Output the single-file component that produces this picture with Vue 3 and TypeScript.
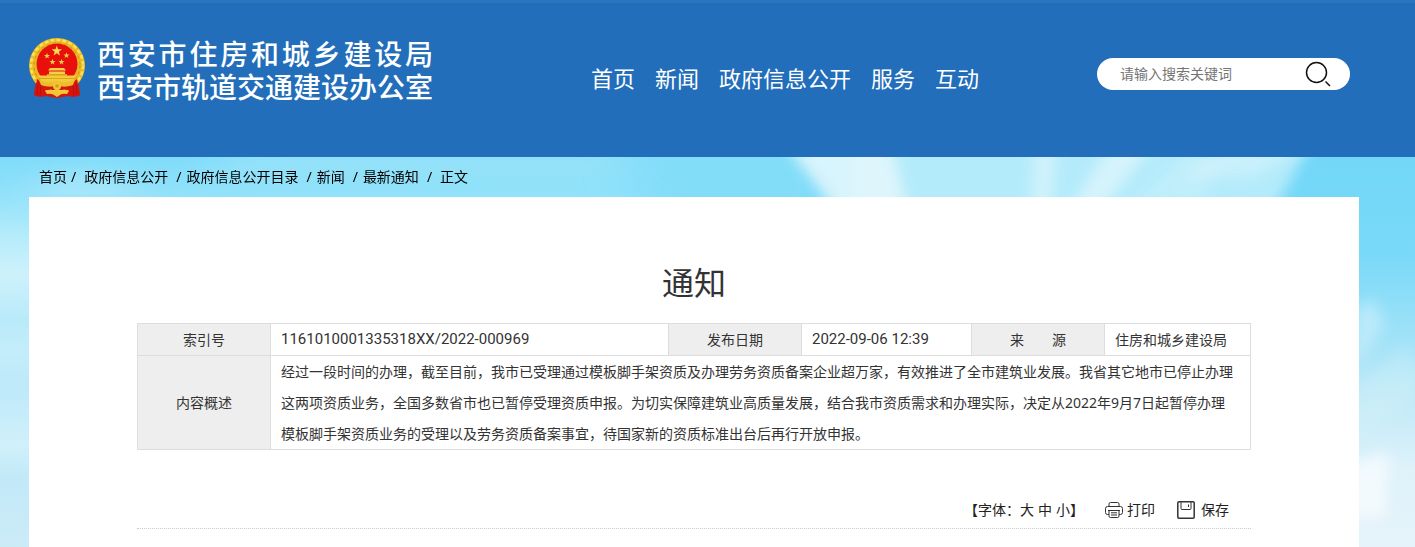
<template>
  <div class="page">
    <header class="header">
      <a class="brand" href="#">
        <svg class="emblem" viewBox="0 0 58 62" aria-hidden="true">
          <path d="M8 43 L6 58 Q12 61 18 59 L29 61 L40 59 Q46 61 52 58 L50 43Z" fill="#d8140d" />
          <ellipse cx="29" cy="28.500" rx="28" ry="27.500" fill="#e9b822" />
          <ellipse cx="29" cy="28.500" rx="26" ry="25.500" fill="none" stroke="#fbe05a" stroke-width="2.500" stroke-dasharray="4 2" />
          <ellipse cx="29" cy="28.500" rx="23" ry="22.500" fill="none" stroke="#cf9214" stroke-width="1" stroke-dasharray="3 3" />
          <circle cx="29" cy="27" r="20.500" fill="#e8100c" />
          <path :d="star(28.8, 14, 5.5)" fill="#fbdc4a" />
          <path v-for="s in smallStars" :key="s.x" :d="star(s.x, s.y, 3.2)" fill="#f6cf3f" />
          <path d="M22 31h14l2 2.500H20zM21 34.500h16V37H21z" fill="#f7d04a" />
          <path d="M19 37h20v2H19z" fill="#dca01c" />
          <path d="M10 38.500h38l-3 6-6 3H19l-6-3z" fill="#f4c93a" />
          <path d="M11 41.500h36" stroke="#d39a18" stroke-width=".8" />
          <path d="M9 42 L6 58 Q12 61 16 58 L18 49Z M49 42 L52 58 Q46 61 42 58 L40 49Z" fill="#d8140d" />
          <path d="M10 46l-1 12M13 48l-1 11M48 46l1 12M45 48l1 11" stroke="#a80f0a" stroke-width=".7" />
          <path d="M11 43q9 4 18 1q9 3 18-1l-2 5q-8 3-13 0l-3 1.500L26 48q-5 3-13 0z" fill="#edbd2d" />
          <path d="M16 49q8 2 13-1q5 3 13 1l-1 4q-8 1-12-1q-4 2-12 1z" fill="#d3190f" />
          <path d="M17 54q7-3 9 0l3-2l3 2q4-3 9 0l-2 3q-5-1-7 1l-3 2l-3-2q-3-2-7-1z" fill="#f1c738" />
          <circle cx="29" cy="49" r="4" fill="#f3c535" />
          <circle cx="29" cy="49" r="1.800" fill="#d89a1a" />
        </svg>
        <span class="names">
          <span class="name spread">西安市住房和城乡建设局</span>
          <span class="name">西安市轨道交通建设办公室</span>
        </span>
      </a>
      <nav class="nav" aria-label="主导航">
        <a v-for="item in nav" :key="item" href="#">{{ item }}</a>
      </nav>
      <form class="search" role="search" @submit.prevent>
        <input v-model="keyword" type="text" aria-label="搜索" placeholder="请输入搜索关键词" />
        <button type="submit" aria-label="搜索">
          <svg viewBox="0 0 26 26" aria-hidden="true">
            <circle cx="11.500" cy="11.500" r="10" />
            <path d="M20.500 20.500l4.500 4.500" />
          </svg>
        </button>
      </form>
    </header>

    <div class="sky">
      <svg class="clouds" viewBox="0 0 1415 390" preserveAspectRatio="none" aria-hidden="true">
        <defs>
          <linearGradient id="west" x1="0" y1="0" x2="0" y2="1">
            <stop offset="0" stop-color="#7fdcf9" />
            <stop offset="0.100" stop-color="#92e2fa" />
            <stop offset="0.200" stop-color="#b4ebfb" />
            <stop offset="0.300" stop-color="#cdf1fb" />
            <stop offset="0.420" stop-color="#b9eafa" />
            <stop offset="0.500" stop-color="#c4edfa" />
            <stop offset="0.580" stop-color="#bde9f9" />
            <stop offset="0.740" stop-color="#d0f0fa" />
            <stop offset="0.820" stop-color="#c2e9f8" />
            <stop offset="1" stop-color="#cbebf7" />
          </linearGradient>
          <linearGradient id="east" x1="0" y1="0" x2="0" y2="1">
            <stop offset="0" stop-color="#72d7f8" />
            <stop offset="0.250" stop-color="#7ad9f8" />
            <stop offset="0.420" stop-color="#98e0f8" />
            <stop offset="0.600" stop-color="#bce8f7" />
            <stop offset="0.800" stop-color="#def2fa" />
            <stop offset="1" stop-color="#e6f3fa" />
          </linearGradient>
          <filter id="soft" x="-20%" y="-50%" width="140%" height="200%">
            <feGaussianBlur stdDeviation="7" />
          </filter>
          <filter id="haze" x="-30%" y="-80%" width="160%" height="260%">
            <feGaussianBlur stdDeviation="24 10" />
          </filter>
        </defs>
        <rect width="800" height="390" fill="url(#west)" />
        <rect x="800" width="615" height="390" fill="url(#east)" />
        <path d="M640-20h190v80H640z" fill="#82ddf9" filter="url(#haze)" />
        <path d="M850-30h470l-50 90H850z" fill="#b4ebfb" filter="url(#soft)" />
        <g filter="url(#haze)" fill="#e2f6fc">
          <path d="M250-20h380v40H200z" opacity="0.200" />
          <path d="M60 10l70 10v25H30z" opacity="0.300" />
        </g>
        <g filter="url(#soft)" fill="#e2f6fc">
          <path d="M780-20h110l18 75h-72z" opacity="0.900" />
          <path d="M1035-20h22l-5 75h-22z" opacity="0.600" />
          <path d="M1115-20h45l-60 75h-32z" opacity="0.700" />
          <path d="M1230-20h90l-65 40h-70z" opacity="0.450" />
          <path d="M1190-10l-60 60h70l20-40z" opacity="0.250" />
          <path d="M1355 150l20-8l10 26l-30 40z" opacity="0.450" />
          <path d="M1355 230l50-40l15 20v30l-65 40z" opacity="0.250" />
          <path d="M1350 305l40-10l-5 65h-35z" fill="#fff" opacity="0.600" />
        </g>
      </svg>

      <nav class="crumbs" aria-label="当前位置">
        <a href="#">首页</a><span class="slash first">/</span><a href="#">政府信息公开</a><span class="slash">/</span><a href="#">政府信息公开目录</a><span class="slash">/</span><a href="#">新闻</a><span class="slash">/</span><a href="#">最新通知</a><span class="slash last">/</span><span>正文</span>
      </nav>

      <main class="panel">
        <h1>通知</h1>
        <table class="info">
          <colgroup>
            <col class="label" /><col class="index" /><col class="label" /><col class="date" /><col class="label" /><col class="origin" />
          </colgroup>
          <tbody>
            <tr>
              <th scope="row">索引号</th>
              <td class="code">1161010001335318XX/2022-000969</td>
              <th scope="row">发布日期</th>
              <td class="code">2022-09-06 12:39</td>
              <th scope="row">来　　源</th>
              <td>住房和城乡建设局</td>
            </tr>
            <tr>
              <th scope="row">内容概述</th>
              <td colspan="5" class="summary">经过一段时间的办理，截至目前，我市已受理通过模板脚手架资质及办理劳务资质备案企业超万家，有效推进了全市建筑业发展。我省其它地市已停止办理这两项资质业务，全国多数省市也已暂停受理资质申报。为切实保障建筑业高质量发展，结合我市资质需求和办理实际，决定从2022年9月7日起暂停办理模板脚手架资质业务的受理以及劳务资质备案事宜，待国家新的资质标准出台后再行开放申报。</td>
            </tr>
          </tbody>
        </table>
        <div class="tools">
          <div class="sizes">【字体：<button v-for="s in sizes" :key="s" type="button">{{ s }}</button>】</div>
          <button type="button" class="tool print">
            <svg viewBox="0 0 18 18" aria-hidden="true">
              <path d="M4 5.500V3Q4 1.500 5.500 1.500h7Q14 1.500 14 3v2.500M4 13.500H2.500q-2 0-2-2v-4q0-2 2-2h13q2 0 2 2v4q0 2-2 2H14M3 9.500h12M4 9.500v5.500q0 1.500 1.500 1.500h7q1.500 0 1.500-1.500V9.500M6 11.800h6M6 14h6" />
            </svg>打印
          </button>
          <button type="button" class="tool save">
            <svg viewBox="0 0 18 18" aria-hidden="true">
              <path d="M2 .8h14q1.200 0 1.200 1.200v14q0 1.200-1.200 1.200H2Q.8 17.200.8 16V2Q.8.8 2 .8z" />
              <path class="thin" d="M4 1v6.500q0 1 1 1h8q1 0 1-1V1M11.500 3.500V6" />
            </svg>保存
          </button>
        </div>
      </main>
    </div>
  </div>
</template>

<script setup lang="ts">
import { ref } from 'vue'

const keyword = ref<string>('')
const nav: string[] = ['首页', '新闻', '政府信息公开', '服务', '互动']
const sizes: string[] = ['大', '中', '小']
const smallStars: { x: number; y: number }[] = [
  { x: 19, y: 19 },
  { x: 38.5, y: 18.5 },
  { x: 24.5, y: 25 },
  { x: 33.5, y: 25 },
]

function star(cx: number, cy: number, r: number): string {
  const points: string[] = []
  for (let i = 0; i < 10; i++) {
    const radius = i % 2 ? r * 0.4 : r
    const angle = (Math.PI / 5) * i - Math.PI / 2
    points.push(`${(cx + radius * Math.cos(angle)).toFixed(2)} ${(cy + radius * Math.sin(angle)).toFixed(2)}`)
  }
  return `M${points.join('L')}Z`
}
</script>

<style>
body {
  margin: 0;
}
</style>

<style scoped>
.page {
  display: flex;
  flex-direction: column;
  min-height: 100vh;
  font: 14px/20px "Noto Sans", "Noto Sans CJK SC", sans-serif;
  color: #333;
}
a {
  color: inherit;
  text-decoration: none;
}
button {
  padding: 0;
  border: 0;
  background: none;
  font: inherit;
  color: inherit;
  cursor: pointer;
}
.header {
  display: flex;
  align-items: flex-start;
  box-sizing: border-box;
  height: 157px;
  padding: 0 65px 0 28px;
  border-top: 3px solid #2c76bf;
  background: #226eba;
  color: #fff;
}
.brand {
  display: flex;
  gap: 11px;
  padding-top: 34px;
}
.emblem {
  width: 58px;
  height: 62px;
}
.names {
  display: flex;
  flex-direction: column;
  width: 336px;
  padding-top: 2px;
}
.name {
  font: 500 28px/33px "Liberation Sans", "Noto Sans CJK SC", sans-serif;
  white-space: nowrap;
}
.spread {
  text-align: justify;
  text-align-last: justify;
}
.nav {
  display: flex;
  gap: 20px;
  padding: 58px 0 0 158px;
  font: 22px/32px "Noto Sans CJK SC", sans-serif;
  white-space: nowrap;
}
.search {
  display: flex;
  align-items: center;
  box-sizing: border-box;
  width: 253px;
  height: 32px;
  margin: 55px 0 0 auto;
  padding: 0 19px 0 23px;
  border-radius: 16px;
  background: #fff;
}
.search input {
  flex: 1;
  min-width: 0;
  padding: 0;
  border: 0;
  outline: 0;
  background: none;
  font: inherit;
}
.search input::placeholder {
  color: #757575;
}
.search svg {
  display: block;
  width: 26px;
  height: 26px;
  fill: none;
  stroke: #111;
  stroke-width: 1.5;
}
.sky {
  position: relative;
  flex: 1;
  padding: 0 56px 0 29px;
}
.clouds {
  position: absolute;
  inset: 0;
  width: 100%;
  height: 100%;
}
.crumbs {
  position: relative;
  height: 40px;
  padding-left: 10px;
  line-height: 40px;
  color: #000;
}
.slash {
  margin: 0 5px 0 8px;
}
.first {
  margin: 0 8px 0 4px;
}
.last {
  margin-right: 8px;
}
.panel {
  position: relative;
  padding: 60px 108px 18px;
  background: #fff;
}
h1 {
  margin: 0;
  font: 32px/48px "Noto Sans CJK SC", sans-serif;
  text-align: center;
}
.info {
  width: 100%;
  margin-top: 18px;
  border-collapse: collapse;
  table-layout: fixed;
}
.info th,
.info td {
  padding: 0 10px;
  border: 1px solid #ddd;
  font-weight: 400;
  line-height: 31px;
  text-align: left;
}
.info th {
  background: #eee;
  text-align: center;
}
.info .code {
  font-family: Roboto, "Noto Sans", sans-serif;
  font-size: 15px;
}
.info .summary {
  padding-right: 14px;
}
.label {
  width: 133px;
}
.date {
  width: 170px;
}
.origin {
  width: 146px;
}
.tools {
  display: flex;
  justify-content: flex-end;
  align-items: center;
  height: 36px;
  margin-top: 42px;
  padding-right: 22px;
  border-bottom: 1px dotted #ccc;
  color: #222;
}
.sizes button + button {
  margin-left: 4px;
}
.tool {
  display: flex;
  align-items: center;
}
.tool svg {
  width: 18px;
  height: 18px;
  fill: none;
  stroke: #333;
}
.print {
  gap: 4px;
  margin-left: 21px;
}
.save {
  gap: 6px;
  margin-left: 22px;
}
.save svg {
  stroke-width: 1.5;
}
.save .thin {
  stroke-width: 1;
}
</style>
